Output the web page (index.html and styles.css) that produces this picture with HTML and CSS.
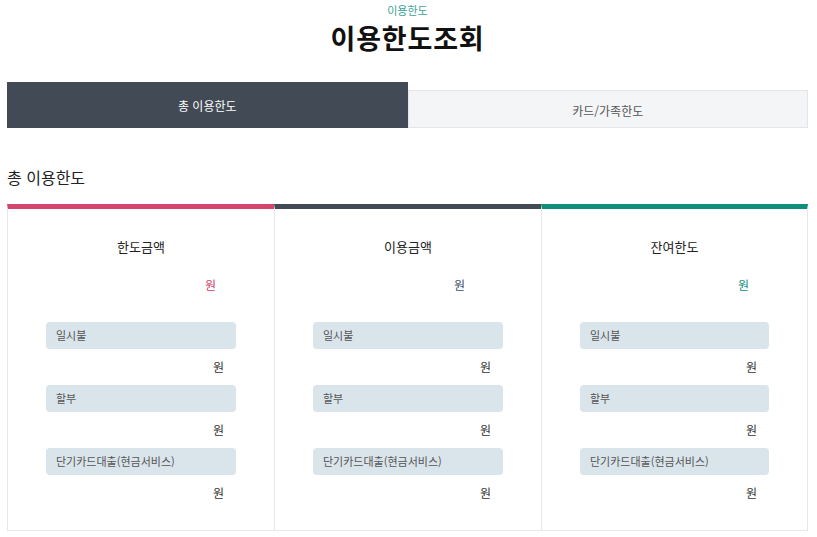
FILE: index.html
```html
<!DOCTYPE html>
<html lang="ko">
<head>
    <meta charset="UTF-8">
    <meta name="viewport" content="width=device-width, initial-scale=1.0">
    <title>이용한도조회</title>
    <link rel="stylesheet" href="styles.css">
</head>
<body>

<div class="wrap">
    <p class="page-label">이용한도</p>
    <h1 class="page-title">이용한도조회</h1>

    <div class="tabs">
        <button class="tab tab-active">총 이용한도</button>
        <button class="tab">카드/가족한도</button>
    </div>

    <h2 class="section-title">총 이용한도</h2>

    <div class="limit-cards">
        <!-- 한도금액 -->
        <div class="limit-col col-limit">
            <h3 class="col-title">한도금액</h3>
            <div class="col-amount"><span class="won">원</span></div>
            <div class="item-label">일시불</div>
            <div class="item-amount">원</div>
            <div class="item-label">할부</div>
            <div class="item-amount">원</div>
            <div class="item-label">단기카드대출(현금서비스)</div>
            <div class="item-amount">원</div>
        </div>

        <!-- 이용금액 -->
        <div class="limit-col col-used">
            <h3 class="col-title">이용금액</h3>
            <div class="col-amount"><span class="won">원</span></div>
            <div class="item-label">일시불</div>
            <div class="item-amount">원</div>
            <div class="item-label">할부</div>
            <div class="item-amount">원</div>
            <div class="item-label">단기카드대출(현금서비스)</div>
            <div class="item-amount">원</div>
        </div>

        <!-- 잔여한도 -->
        <div class="limit-col col-left">
            <h3 class="col-title">잔여한도</h3>
            <div class="col-amount"><span class="won">원</span></div>
            <div class="item-label">일시불</div>
            <div class="item-amount">원</div>
            <div class="item-label">할부</div>
            <div class="item-amount">원</div>
            <div class="item-label">단기카드대출(현금서비스)</div>
            <div class="item-amount">원</div>
        </div>
    </div>
</div>

</body>
</html>
```

FILE: styles.css
```css
* {
    margin: 0;
    padding: 0;
    box-sizing: border-box;
}

body {
    font-family: "Noto Sans CJK KR", "Noto Sans", sans-serif;
    background-color: #ffffff;
    color: #222222;
}

.wrap {
    width: 801px;
    margin: 0 9px 0 7px;
}

.page-label {
    height: 20px;
    line-height: 20px;
    font-size: 11px;
    color: #3aa398;
    text-align: center;
}

.page-title {
    height: 36px;
    line-height: 36px;
    font-size: 27px;
    font-weight: 700;
    letter-spacing: 0.8px;
    color: #111111;
    text-align: center;
}

/* 탭 */
.tabs {
    display: flex;
    align-items: flex-end;
    height: 46px;
    margin-top: 26px;
}

.tab {
    flex: 1;
    height: 38px;
    font-family: inherit;
    font-size: 12px;
    color: #555555;
    background-color: #f4f5f7;
    border: 1px solid #e3e5e8;
    cursor: pointer;
    padding-top: 2px;
}

.tab-active {
    height: 46px;
    color: #ffffff;
    background-color: #424a56;
    border-color: #424a56;
    padding-top: 0;
}

.section-title {
    height: 24px;
    line-height: 24px;
    margin-top: 37px;
    font-size: 16px;
    font-weight: 400;
    color: #222222;
}

/* 한도 카드 */
.limit-cards {
    display: grid;
    grid-template-columns: repeat(3, 1fr);
    margin-top: 15px;
    border-bottom: 1px solid #e6e7e9;
}

.limit-col {
    border-top: 5px solid #424a56;
    border-left: 1px solid #e6e7e9;
    padding: 28px 38px 27px;
}

.limit-col:last-child {
    border-right: 1px solid #e6e7e9;
}

.col-limit {
    border-top-color: #d3456c;
}

.col-used {
    border-top-color: #424a56;
}

.col-left {
    border-top-color: #0f8f7b;
}

.col-title {
    height: 20px;
    line-height: 20px;
    font-size: 13px;
    font-weight: 400;
    text-align: center;
    color: #222222;
}

.col-amount {
    height: 20px;
    line-height: 20px;
    margin-top: 18px;
    padding-right: 20px;
    text-align: right;
    font-size: 12px;
}

.col-used .col-amount {
    padding-right: 38px;
}

.col-limit .won {
    color: #d3456c;
}

.col-used .won {
    color: #3e4f6e;
}

.col-left .won {
    color: #0f8f7b;
}

.item-label {
    height: 27px;
    line-height: 27px;
    margin-top: 27px;
    padding-left: 10px;
    font-size: 11px;
    color: #555555;
    background-color: #dae4eb;
    border-radius: 4px;
}

.item-amount + .item-label {
    margin-top: 8px;
}

.item-amount {
    height: 20px;
    line-height: 20px;
    margin-top: 8px;
    padding-right: 12px;
    text-align: right;
    font-size: 12px;
    color: #333333;
}
```
